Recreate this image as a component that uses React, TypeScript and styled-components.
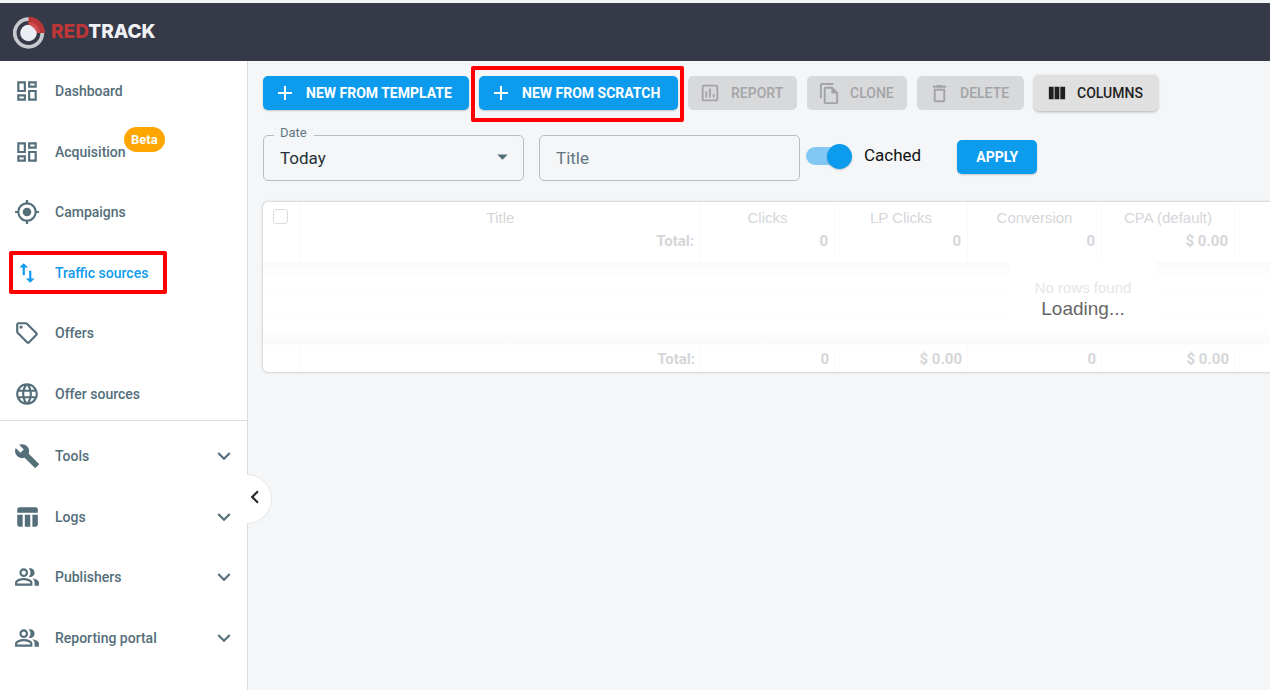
import React from "react";
import type { ReactNode } from "react";
import styled, { createGlobalStyle, css } from "styled-components";
import {
  MdAdd,
  MdArrowDropDown,
  MdBuild,
  MdChevronLeft,
  MdDeleteOutline,
  MdExpandMore,
  MdGpsFixed,
  MdImportExport,
  MdLanguage,
  MdOutlineAssessment,
  MdOutlineDashboard,
  MdOutlineFileCopy,
  MdOutlineLocalOffer,
  MdOutlinePeopleAlt,
  MdTableChart,
} from "react-icons/md";

const GlobalStyle = createGlobalStyle`
  *, *::before, *::after { box-sizing: border-box; }
  body {
    margin: 0;
    background: #f4f6f8;
    color: #1d2126;
    font-family: Roboto, "Liberation Sans", sans-serif;
    font-size: 14px;
  }
  button, input, select { font: inherit; color: inherit; }
`;

const Page = styled.div`
  display: flex;
  flex-direction: column;
  min-height: 100vh;
  overflow: hidden;
`;

const TopBar = styled.header`
  display: flex;
  align-items: center;
  height: 61px;
  padding: 0 13px;
  background: #363947;
  border-top: 3px solid #f3f4f5;
`;

const Brand = styled.a`
  display: flex;
  align-items: center;
  gap: 5px;
  color: #f0f1f5;
  font-family: Inter, sans-serif;
  font-size: 19px;
  font-weight: 800;
  line-height: 24px;
  text-decoration: none;
`;

const BrandRed = styled.span`
  color: #bd3638;
`;

const Body = styled.div`
  display: flex;
  flex: 1;
`;

const Sidebar = styled.aside`
  position: relative;
  flex: 0 0 248px;
  background: #fff;
  border-right: 1px solid #dcdde0;
`;

const NavGroup = styled.ul<{ $height: number; $top: number; $divider?: boolean }>`
  display: flex;
  flex-direction: column;
  justify-content: space-between;
  height: ${(p) => p.$height}px;
  margin: 0;
  padding: ${(p) => p.$top}px 0 0;
  list-style: none;
  border-bottom: ${(p) => (p.$divider ? "1px solid #dcdde0" : "0")};
`;

const NavItem = styled.li`
  position: relative;
  height: 52px;
`;

const NavLink = styled.a<{ $active?: boolean }>`
  display: flex;
  align-items: center;
  gap: 15px;
  height: 100%;
  padding: 0 10px 0 14px;
  color: ${(p) => (p.$active ? "#0d9bed" : "#546e7a")};
  font-size: 14px;
  font-weight: 500;
  line-height: 20px;
  text-decoration: none;
`;

const NavText = styled.span`
  flex: 1;
`;

const Badge = styled.span`
  position: absolute;
  top: 1px;
  left: 124px;
  padding: 0 7px;
  border-radius: 13px;
  background: #ffa500;
  color: #fff;
  font-size: 13px;
  font-weight: 700;
  line-height: 25px;
`;

const Outline = styled.span<{ $nav?: boolean }>`
  position: absolute;
  border: 4px solid #fe0000;
  border-radius: 2px;
  pointer-events: none;
  ${(p) =>
    p.$nav
      ? css`
          inset: 4px 80px 5px 9px;
        `
      : css`
          inset: -10px -6px -12px -8px;
        `}
`;

const Collapse = styled.button`
  position: absolute;
  top: 413px;
  left: 247px;
  display: flex;
  align-items: center;
  width: 25px;
  height: 50px;
  padding: 0 0 4px;
  border: 1px solid #e6e7ea;
  border-left: 0;
  border-radius: 0 25px 25px 0;
  background: #fff;
  color: #22272c;
`;

const CollapseIcon = styled(MdChevronLeft)`
  flex: none;
  margin-left: -5px;
`;

const Main = styled.main`
  flex: 1;
  min-width: 0;
  padding: 14px 0 0 15px;
`;

const Toolbar = styled.div`
  display: flex;
  align-items: center;
  gap: 10px;
  height: 36px;
`;

const Highlighted = styled.div`
  position: relative;
  display: flex;
`;

type Tone = "primary" | "default" | "disabled";

const tones = {
  primary: css`
    background: #0d9bed;
    color: #fff;
    font-weight: 700;
    box-shadow: 0 1px 2px rgba(0, 0, 0, 0.2);
  `,
  default: css`
    height: 36px;
    background: #e0e0e0;
    color: #1f1f1f;
    font-weight: 500;
    box-shadow: 0 1px 3px rgba(0, 0, 0, 0.28);
  `,
  disabled: css`
    background: #d8d9db;
    color: #a3a4a7;
    font-weight: 500;
  `,
};

const Button = styled.button<{ $tone: Tone; $width: number; $centered?: boolean }>`
  display: flex;
  align-items: center;
  justify-content: ${(p) => (p.$centered ? "center" : "flex-start")};
  gap: 9px;
  flex: none;
  width: ${(p) => p.$width}px;
  height: 34px;
  padding: ${(p) => (p.$centered ? "0" : "0 0 0 10px")};
  border: 0;
  border-radius: 5px;
  font-size: 14px;
  line-height: 20px;
  white-space: nowrap;
  ${(p) => tones[p.$tone]}
`;

const IconSlot = styled.span`
  display: flex;
  align-items: center;
  justify-content: center;
  width: 24px;
`;

const Filters = styled.div`
  display: flex;
  align-items: flex-start;
  margin-top: 24px;
`;

const Field = styled.div`
  position: relative;
  width: 261px;
  height: 46px;
  margin-right: 15px;
`;

const controlStyle = css`
  width: 100%;
  height: 100%;
  padding: 0 16px;
  border: 1px solid #b9bcc0;
  border-radius: 5px;
  background: transparent;
  font-size: 17px;
  line-height: 24px;
  outline: 0;
`;

const Select = styled.select`
  ${controlStyle}
  appearance: none;
  color: #263238;
`;

const TextInput = styled.input`
  ${controlStyle}
  &::placeholder { color: #607682; opacity: 1; }
`;

const FieldLabel = styled.label`
  position: absolute;
  top: -10px;
  left: 11px;
  padding: 0 7px 0 6px;
  background: #f4f6f8;
  color: #607682;
  font-size: 13px;
  line-height: 16px;
`;

const Caret = styled(MdArrowDropDown)`
  position: absolute;
  top: 9px;
  right: 9px;
  color: #546e7a;
  pointer-events: none;
`;

const SwitchLabel = styled.label`
  display: flex;
  align-items: center;
  gap: 12px;
  height: 40px;
  margin-left: -9px;
  font-size: 17px;
  line-height: 24px;
  color: #111;
`;

const Switch = styled.input`
  position: relative;
  appearance: none;
  width: 46px;
  height: 25px;
  margin: 2px 0 0;
  &::before {
    content: "";
    position: absolute;
    inset: 3px 3px 4px 0;
    border-radius: 9px;
    background: #82c8f4;
  }
  &::after {
    content: "";
    position: absolute;
    top: 0;
    right: 0;
    width: 25px;
    height: 25px;
    border-radius: 50%;
    background: #0d9bed;
    box-shadow: 0 1px 2px rgba(0, 0, 0, 0.2);
  }
`;

const ApplySlot = styled.div`
  margin: 5px 0 0 36px;
`;

const Card = styled.section`
  position: relative;
  width: 1640px;
  margin-top: 21px;
  border-radius: 5px;
  background: #fff;
  box-shadow: 0 0 3px rgba(0, 0, 0, 0.28);
  overflow: hidden;
`;

const Grid = styled.table`
  width: 100%;
  table-layout: fixed;
  border-collapse: separate;
  border-spacing: 0;
  color: #d5d6d9;
  font-family: "Liberation Sans", Arial, sans-serif;
  font-size: 15px;
  line-height: 20px;
`;

const Col = styled.col<{ $width?: number }>`
  width: ${(p) => (p.$width ? `${p.$width}px` : "auto")};
`;

const HeadCell = styled.th`
  height: 27px;
  padding: 6px 0 0;
  border-right: 1px solid #fafafa;
  font-weight: 400;
  text-align: center;
  vertical-align: top;
`;

const TotalCell = styled.td<{ $foot?: boolean }>`
  height: ${(p) => (p.$foot ? 27 : 33)}px;
  padding: ${(p) => (p.$foot ? "4px 5px 3px 0" : "2px 6px 0 0")};
  border-right: 1px solid #fafafa;
  font-family: Roboto, sans-serif;
  font-weight: 700;
  text-align: right;
  vertical-align: top;
`;

const EmptyCell = styled.td<{ $shade?: "top" | "bottom" }>`
  height: ${(p) => (p.$shade ? 28 : 27)}px;
  padding: 0;
  border-bottom: 1px solid #fcfcfc;
  background: ${(p) =>
    p.$shade === "top"
      ? "linear-gradient(#fafafa, #fff 70%)"
      : p.$shade === "bottom"
        ? "linear-gradient(#fff 30%, #fafafa)"
        : "#fff"};
`;

const Check = styled.input`
  appearance: none;
  display: block;
  width: 15px;
  height: 15px;
  margin: 1px 0 0 10px;
  border: 1px solid #dcdcdd;
  border-radius: 3px;
  background: #fff;
`;

const Overlay = styled.div`
  position: absolute;
  top: 60px;
  left: 50%;
  width: 147px;
  padding-top: 16px;
  transform: translateX(-50%);
  background: #fff;
  font-family: "Liberation Sans", Arial, sans-serif;
  text-align: center;
`;

const NoRows = styled.p`
  margin: 0;
  color: #e6e6e6;
  font-size: 15px;
  line-height: 20px;
`;

const Loading = styled.p`
  margin: 0;
  color: #666;
  font-size: 19px;
  line-height: 22px;
`;

const Logo = () => (
  <svg width="33" height="33" viewBox="0 0 33 33" aria-hidden="true">
    <circle cx="15.5" cy="17" r="13.8" fill="none" stroke="#c6c9cd" strokeWidth="3.8" />
    <path d="M15.5 0.8A16.2 16.2 0 0 1 31.9 17H15.5Z" fill="#b93537" />
    <path d="M15.5 8A9 9 0 0 1 24.5 17L27 17A11 11 0 0 0 15.5 6Z" fill="#d04c4c" />
    <circle cx="15.5" cy="17" r="8.3" fill="#ecedf2" />
    <path d="M15.5 8.7A8.3 8.3 0 0 1 23.8 17C22.6 13.2 19.4 10 15.5 8.7Z" fill="#d04c4c" />
  </svg>
);

const ColumnsIcon = () => (
  <svg width="23" height="23" viewBox="0 0 24 24" fill="currentColor" aria-hidden="true">
    <path d="M10 18h5V5h-5v13zm-6 0h5V5H4v13zM16 5v13h5V5h-5z" />
  </svg>
);

interface NavEntry {
  label: string;
  icon: ReactNode;
  active?: boolean;
  badge?: string;
  expandable?: boolean;
}

const mainNav: NavEntry[] = [
  { label: "Dashboard", icon: <MdOutlineDashboard size={26} /> },
  { label: "Acquisition", icon: <MdOutlineDashboard size={26} />, badge: "Beta" },
  { label: "Campaigns", icon: <MdGpsFixed size={26} /> },
  { label: "Traffic sources", icon: <MdImportExport size={26} />, active: true },
  { label: "Offers", icon: <MdOutlineLocalOffer size={26} /> },
  { label: "Offer sources", icon: <MdLanguage size={26} /> },
];

const moreNav: NavEntry[] = [
  { label: "Tools", icon: <MdBuild size={26} />, expandable: true },
  { label: "Logs", icon: <MdTableChart size={26} />, expandable: true },
  { label: "Publishers", icon: <MdOutlinePeopleAlt size={26} />, expandable: true },
  { label: "Reporting portal", icon: <MdOutlinePeopleAlt size={26} />, expandable: true },
];

const NavRow = ({ entry }: { entry: NavEntry }) => (
  <NavItem>
    <NavLink href="#" $active={entry.active}>
      {entry.icon}
      <NavText>{entry.label}</NavText>
      {entry.expandable && <MdExpandMore size={26} />}
    </NavLink>
    {entry.badge && <Badge>{entry.badge}</Badge>}
    {entry.active && <Outline $nav />}
  </NavItem>
);

interface ActionProps {
  label: string;
  icon: ReactNode;
  tone: Tone;
  width: number;
}

const Action = ({ label, icon, tone, width }: ActionProps) => (
  <Button type="button" $tone={tone} $width={width} disabled={tone === "disabled"}>
    <IconSlot>{icon}</IconSlot>
    {label}
  </Button>
);

const columns = [
  { name: "Clicks", total: "0", foot: "0", width: 134 },
  { name: "LP Clicks", total: "0", foot: "$ 0.00", width: 133 },
  { name: "Conversion", total: "0", foot: "0", width: 134 },
  { name: "CPA (default)", total: "$ 0.00", foot: "$ 0.00", width: 133 },
];

const App = () => (
  <>
    <GlobalStyle />
    <Page>
      <TopBar>
        <Brand href="#">
          <Logo />
          <span>
            <BrandRed>RED</BrandRed>TRACK
          </span>
        </Brand>
      </TopBar>
      <Body>
        <Sidebar>
          <nav>
            <NavGroup $height={360} $top={4} $divider>
              {mainNav.map((e) => (
                <NavRow key={e.label} entry={e} />
              ))}
            </NavGroup>
            <NavGroup $height={243} $top={9}>
              {moreNav.map((e) => (
                <NavRow key={e.label} entry={e} />
              ))}
            </NavGroup>
          </nav>
          <Collapse type="button" aria-label="Collapse menu">
            <CollapseIcon size={26} />
          </Collapse>
        </Sidebar>
        <Main>
          <Toolbar>
            <Action label="NEW FROM TEMPLATE" icon={<MdAdd size={24} />} tone="primary" width={206} />
            <Highlighted>
              <Action label="NEW FROM SCRATCH" icon={<MdAdd size={24} />} tone="primary" width={199} />
              <Outline />
            </Highlighted>
            <Action label="REPORT" icon={<MdOutlineAssessment size={22} />} tone="disabled" width={109} />
            <Action label="CLONE" icon={<MdOutlineFileCopy size={23} />} tone="disabled" width={100} />
            <Action label="DELETE" icon={<MdDeleteOutline size={23} />} tone="disabled" width={107} />
            <Action label="COLUMNS" icon={<ColumnsIcon />} tone="default" width={124} />
          </Toolbar>
          <Filters>
            <Field>
              <Select id="date" defaultValue="today">
                <option value="today">Today</option>
              </Select>
              <FieldLabel htmlFor="date">Date</FieldLabel>
              <Caret size={25} />
            </Field>
            <Field>
              <TextInput type="text" placeholder="Title" aria-label="Title" />
            </Field>
            <SwitchLabel>
              <Switch type="checkbox" role="switch" defaultChecked />
              Cached
            </SwitchLabel>
            <ApplySlot>
              <Button type="button" $tone="primary" $width={80} $centered>
                APPLY
              </Button>
            </ApplySlot>
          </Filters>
          <Card>
            <Grid>
              <colgroup>
                <Col $width={38} />
                <Col $width={400} />
                {columns.map((c) => (
                  <Col key={c.name} $width={c.width} />
                ))}
                <Col />
              </colgroup>
              <thead>
                <tr>
                  <HeadCell>
                    <Check type="checkbox" aria-label="Select all rows" />
                  </HeadCell>
                  <HeadCell>Title</HeadCell>
                  {columns.map((c) => (
                    <HeadCell key={c.name}>{c.name}</HeadCell>
                  ))}
                  <HeadCell />
                </tr>
                <tr>
                  <TotalCell />
                  <TotalCell>Total:</TotalCell>
                  {columns.map((c) => (
                    <TotalCell key={c.name}>{c.total}</TotalCell>
                  ))}
                  <TotalCell />
                </tr>
              </thead>
              <tbody>
                <tr>
                  <EmptyCell colSpan={7} $shade="top" />
                </tr>
                <tr>
                  <EmptyCell colSpan={7} />
                </tr>
                <tr>
                  <EmptyCell colSpan={7} $shade="bottom" />
                </tr>
              </tbody>
              <tfoot>
                <tr>
                  <TotalCell $foot />
                  <TotalCell $foot>Total:</TotalCell>
                  {columns.map((c) => (
                    <TotalCell $foot key={c.name}>
                      {c.foot}
                    </TotalCell>
                  ))}
                  <TotalCell $foot />
                </tr>
              </tfoot>
            </Grid>
            <Overlay role="status">
              <NoRows>No rows found</NoRows>
              <Loading>Loading...</Loading>
            </Overlay>
          </Card>
        </Main>
      </Body>
    </Page>
  </>
);

export default App;
